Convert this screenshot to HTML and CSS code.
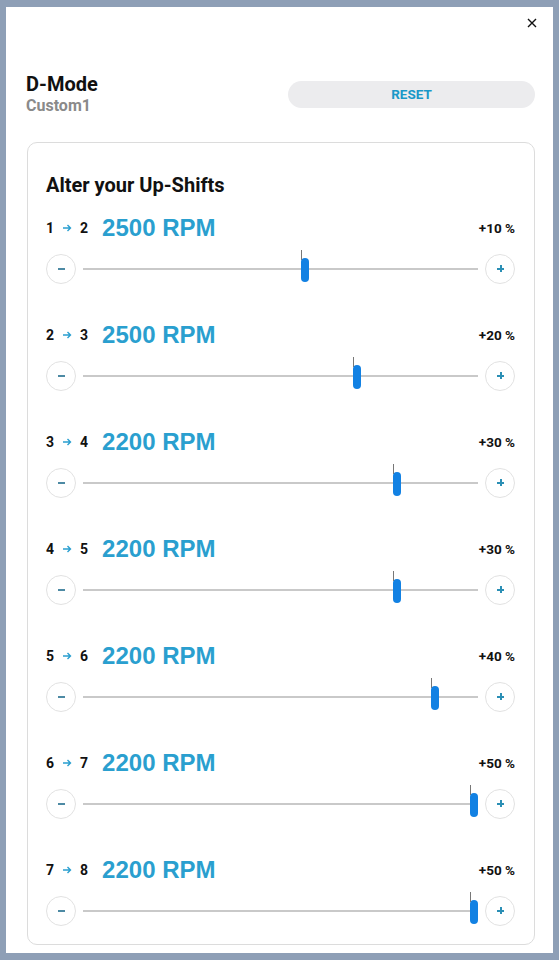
FILE: index.html
```html
<!DOCTYPE html>
<html lang="en">
<head>
	<meta charset="UTF-8">
	<title>D-Mode</title>
	<link rel="stylesheet" href="styles.css">
</head>
<body>
	<div class="window">
		<div class="topbar">
			<span class="close">
				<svg width="10" height="10" viewBox="0 0 10 10"><path d="M1 1L9 9M9 1L1 9" stroke="#111" stroke-width="1.4" fill="none"/></svg>
			</span>
		</div>
		<div class="header">
			<div class="mode">
				<div class="mode-name">D-Mode</div>
				<div class="mode-sub">Custom1</div>
			</div>
			<div class="reset">RESET</div>
		</div>
		<div class="card">
			<div class="card-title">Alter your Up-Shifts</div>

			<div class="shift">
				<div class="shift-head">
					<span class="gear">1</span><svg class="arrow" width="10" height="10" viewBox="0 0 10 10"><path d="M1 5H8.5M5.5 2L8.5 5L5.5 8" stroke="#2a9fd0" stroke-width="1.4" fill="none"/></svg><span class="gear">2</span>
					<span class="rpm">2500 RPM</span>
					<span class="pct">+10 %</span>
				</div>
				<div class="slider">
					<span class="btn minus"></span>
					<div class="track"><span class="thumb" style="left:56.3%"></span></div>
					<span class="btn plus"></span>
				</div>
			</div>

			<div class="shift">
				<div class="shift-head">
					<span class="gear">2</span><svg class="arrow" width="10" height="10" viewBox="0 0 10 10"><path d="M1 5H8.5M5.5 2L8.5 5L5.5 8" stroke="#2a9fd0" stroke-width="1.4" fill="none"/></svg><span class="gear">3</span>
					<span class="rpm">2500 RPM</span>
					<span class="pct">+20 %</span>
				</div>
				<div class="slider">
					<span class="btn minus"></span>
					<div class="track"><span class="thumb" style="left:69.3%"></span></div>
					<span class="btn plus"></span>
				</div>
			</div>

			<div class="shift">
				<div class="shift-head">
					<span class="gear">3</span><svg class="arrow" width="10" height="10" viewBox="0 0 10 10"><path d="M1 5H8.5M5.5 2L8.5 5L5.5 8" stroke="#2a9fd0" stroke-width="1.4" fill="none"/></svg><span class="gear">4</span>
					<span class="rpm">2200 RPM</span>
					<span class="pct">+30 %</span>
				</div>
				<div class="slider">
					<span class="btn minus"></span>
					<div class="track"><span class="thumb" style="left:79.4%"></span></div>
					<span class="btn plus"></span>
				</div>
			</div>

			<div class="shift">
				<div class="shift-head">
					<span class="gear">4</span><svg class="arrow" width="10" height="10" viewBox="0 0 10 10"><path d="M1 5H8.5M5.5 2L8.5 5L5.5 8" stroke="#2a9fd0" stroke-width="1.4" fill="none"/></svg><span class="gear">5</span>
					<span class="rpm">2200 RPM</span>
					<span class="pct">+30 %</span>
				</div>
				<div class="slider">
					<span class="btn minus"></span>
					<div class="track"><span class="thumb" style="left:79.4%"></span></div>
					<span class="btn plus"></span>
				</div>
			</div>

			<div class="shift">
				<div class="shift-head">
					<span class="gear">5</span><svg class="arrow" width="10" height="10" viewBox="0 0 10 10"><path d="M1 5H8.5M5.5 2L8.5 5L5.5 8" stroke="#2a9fd0" stroke-width="1.4" fill="none"/></svg><span class="gear">6</span>
					<span class="rpm">2200 RPM</span>
					<span class="pct">+40 %</span>
				</div>
				<div class="slider">
					<span class="btn minus"></span>
					<div class="track"><span class="thumb" style="left:89.1%"></span></div>
					<span class="btn plus"></span>
				</div>
			</div>

			<div class="shift">
				<div class="shift-head">
					<span class="gear">6</span><svg class="arrow" width="10" height="10" viewBox="0 0 10 10"><path d="M1 5H8.5M5.5 2L8.5 5L5.5 8" stroke="#2a9fd0" stroke-width="1.4" fill="none"/></svg><span class="gear">7</span>
					<span class="rpm">2200 RPM</span>
					<span class="pct">+50 %</span>
				</div>
				<div class="slider">
					<span class="btn minus"></span>
					<div class="track"><span class="thumb" style="left:99%"></span></div>
					<span class="btn plus"></span>
				</div>
			</div>

			<div class="shift last">
				<div class="shift-head">
					<span class="gear">7</span><svg class="arrow" width="10" height="10" viewBox="0 0 10 10"><path d="M1 5H8.5M5.5 2L8.5 5L5.5 8" stroke="#2a9fd0" stroke-width="1.4" fill="none"/></svg><span class="gear">8</span>
					<span class="rpm">2200 RPM</span>
					<span class="pct">+50 %</span>
				</div>
				<div class="slider">
					<span class="btn minus"></span>
					<div class="track"><span class="thumb" style="left:99%"></span></div>
					<span class="btn plus"></span>
				</div>
			</div>
		</div>
	</div>
</body>
</html>
```

FILE: styles.css
```css
*{
	box-sizing: border-box;
}
body{
	margin: 0;
	background-color: #8e9fb6;
	font-family: Roboto, "Noto Sans", sans-serif;
	color: #111;
}
.window{
	margin: 7px 6px;
	height: 946px;
	background-color: #fff;
	padding: 0 18px 0 20px;
}
.topbar{
	height: 32px;
	display: flex;
	justify-content: flex-end;
	align-items: center;
	margin-right: -4px;
}
.close{
	display: flex;
	width: 14px;
	height: 14px;
	align-items: center;
	justify-content: center;
}
.header{
	margin-top: 34px;
	display: flex;
	align-items: center;
	justify-content: space-between;
}
.mode-name{
	font-size: 20px;
	line-height: 23px;
	font-weight: bold;
}
.mode-sub{
	font-size: 16px;
	line-height: 18px;
	font-weight: bold;
	color: #8a8a8a;
	margin-top: 1px;
}
.reset{
	width: 247px;
	height: 27px;
	border-radius: 14px;
	background-color: #ececee;
	color: #1a98c8;
	font-size: 13.5px;
	font-weight: bold;
	display: flex;
	align-items: center;
	justify-content: center;
}
.card{
	margin-top: 27px;
	margin-left: 1px;
	height: 803px;
	border: 1px solid #dcdcdc;
	border-radius: 10px;
	padding: 31px 19px 0 18px;
}
.card-title{
	font-size: 20px;
	line-height: 22px;
	font-weight: bold;
	margin-bottom: 18px;
}
.shift{
	margin-bottom: 36px;
}
.shift-head{
	height: 28px;
	display: flex;
	align-items: center;
	font-weight: bold;
	font-size: 14px;
}
.arrow{
	margin: 0 8px 0 8px;
}
.rpm{
	font-family: "Liberation Sans", Arial, sans-serif;
	font-size: 24px;
	color: #2a9fcf;
	margin-left: 14px;
}
.pct{
	margin-left: auto;
	font-size: 13.5px;
}
.slider{
	margin-top: 11px;
	height: 32px;
	display: flex;
	align-items: center;
	gap: 7px;
}
.btn{
	width: 30px;
	height: 30px;
	border: 1px solid #e2e2e2;
	border-radius: 50%;
	position: relative;
	flex-shrink: 0;
}
.btn::before, .plus::after{
	content: "";
	position: absolute;
	left: 11px;
	top: 13px;
	width: 7px;
	height: 1.5px;
	background-color: #4d8aa4;
}
.plus::before{
	background-color: #2b8fb5;
}
.plus::after{
	background-color: #2b8fb5;
	width: 1.5px;
	height: 7px;
	left: 14px;
	top: 10px;
}
.track{
	flex: 1;
	height: 2px;
	background-color: #c9c9c9;
	position: relative;
}
.thumb{
	position: absolute;
	top: -10px;
	width: 8px;
	height: 24px;
	margin-left: -4px;
	border-radius: 4px;
	background-color: #1281e3;
}
.thumb::before{
	content: "";
	position: absolute;
	left: 0;
	top: -8px;
	width: 1px;
	height: 10px;
	background-color: #777;
}
```
